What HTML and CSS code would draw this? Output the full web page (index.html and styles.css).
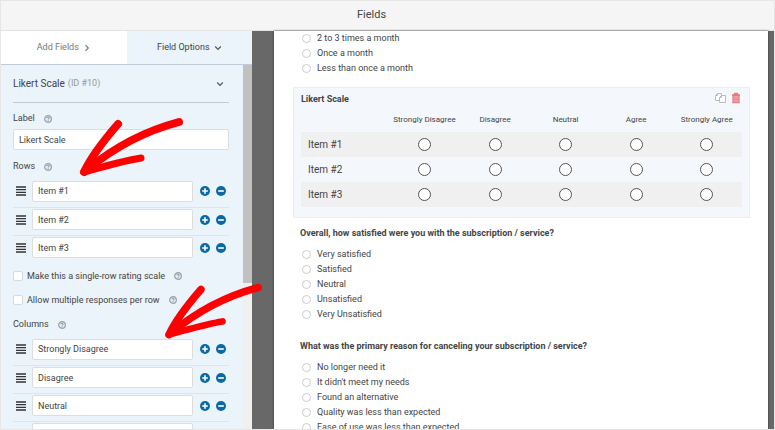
FILE: index.html
```html
<!DOCTYPE html>
<html lang="en">
<head>
<meta charset="UTF-8">
<meta name="viewport" content="width=device-width, initial-scale=1.0">
<title>Fields</title>
<link rel="stylesheet" href="styles.css">
</head>
<body>

<svg class="sprite" aria-hidden="true">
  <symbol id="help" viewBox="0 0 16 16">
    <circle cx="8" cy="8" r="6.6" fill="none" stroke="#9aa3ab" stroke-width="2.600"/>
    <path d="M5.600 6.400c0-1.400 1-2.100 2.400-2.100s2.400.7 2.400 2c0 1.400-2.200 1.500-2.200 3" fill="none" stroke="#9aa3ab" stroke-width="2.200"/>
    <circle cx="8.200" cy="11.500" r="1.300" fill="#9aa3ab"/>
  </symbol>
  <symbol id="bars" viewBox="0 0 10 10">
    <path d="M0 1h10M0 3.700h10M0 6.300h10M0 9h10" stroke="#333" stroke-width="1.300"/>
  </symbol>
  <symbol id="plus" viewBox="0 0 10 10">
    <circle cx="5" cy="5" r="5" fill="#0a6aa6"/>
    <path d="M5 2.200v5.600M2.200 5h5.600" stroke="#fff" stroke-width="1.600"/>
  </symbol>
  <symbol id="minus" viewBox="0 0 10 10">
    <circle cx="5" cy="5" r="5" fill="#0a6aa6"/>
    <path d="M2.200 5h5.600" stroke="#fff" stroke-width="1.600"/>
  </symbol>
  <symbol id="down" viewBox="0 0 8 8">
    <path d="M1.200 2.500l2.800 2.800 2.800-2.800" fill="none" stroke="#555" stroke-width="1.200"/>
  </symbol>
  <symbol id="right" viewBox="0 0 8 8">
    <path d="M2.500 1.200l2.800 2.800-2.800 2.800" fill="none" stroke="#777" stroke-width="1.200"/>
  </symbol>
</svg>

<div class="app">
  <header class="header"><h1>Fields</h1></header>

  <div class="main">
    <aside class="sidebar">
      <nav class="tabs">
        <a href="#add">Add Fields <svg><use href="#right"/></svg></a>
        <a href="#options" class="active">Field Options <svg><use href="#down"/></svg></a>
      </nav>

      <div class="panel">
        <div class="options">
          <h2>Likert Scale <span>(ID #10)</span> <svg><use href="#down"/></svg></h2>

          <div class="title"><label for="label">Label</label> <svg><use href="#help"/></svg></div>
          <input type="text" id="label" class="text" value="Likert Scale">

          <div class="title">Rows <svg><use href="#help"/></svg></div>
          <ul class="choices" id="rows"></ul>

          <div class="toggle">
            <input type="checkbox" id="single"><label for="single">Make this a single-row rating scale</label>
            <svg><use href="#help"/></svg>
          </div>
          <div class="toggle">
            <input type="checkbox" id="multiple"><label for="multiple">Allow multiple responses per row</label>
            <svg><use href="#help"/></svg>
          </div>

          <div class="title">Columns <svg><use href="#help"/></svg></div>
          <ul class="choices" id="columns"></ul>
        </div>
        <div class="scrollbar"><div class="thumb"></div></div>
      </div>

      <svg class="arrow arrow-rows" viewBox="0 0 110 66">
        <path d="M101 7C67 16 38 31 10 54"/>
        <path d="M40 9C27 24 14 40 6 57"/>
        <path d="M63 43C44 46 25 52 6 57" stroke-width="7"/>
      </svg>
      <svg class="arrow arrow-columns" viewBox="0 0 110 66">
        <path d="M101 7C67 16 38 31 10 54"/>
        <path d="M40 9C27 24 14 40 6 57"/>
        <path d="M63 43C44 46 25 52 6 57" stroke-width="7"/>
      </svg>
    </aside>

    <main class="preview">
      <fieldset class="field first">
        <label><input type="radio" name="often"> 2 to 3 times a month</label>
        <label><input type="radio" name="often"> Once a month</label>
        <label><input type="radio" name="often"> Less than once a month</label>
      </fieldset>

      <section class="field likert">
        <div class="likert-head">
          <h3>Likert Scale</h3>
          <button type="button" aria-label="Duplicate">
            <svg viewBox="0 0 12 12" fill="#fff" stroke="#bbb"><path d="M3.500 1.500h4v7h-6v-5zM3.500 1.500v2h-2"/><path d="M7.500 3.500h4v7h-6v-5zM7.500 3.500v2h-2"/></svg>
          </button>
          <button type="button" aria-label="Delete">
            <svg viewBox="0 0 12 12" fill="none" stroke="#e8797d"><path d="M2 3h8M4.500 2.500v-1h3v1" stroke-width="1.300"/><path d="M3 3.500v7h6v-7z" fill="#f4b5b7" stroke-width="1.300"/><path d="M5 5v4M7 5v4"/></svg>
          </button>
        </div>
        <table>
          <thead>
            <tr><th></th><th>Strongly Disagree</th><th>Disagree</th><th>Neutral</th><th>Agree</th><th>Strongly Agree</th></tr>
          </thead>
          <tbody id="likert"></tbody>
        </table>
      </section>

      <fieldset class="field">
        <legend>Overall, how satisfied were you with the subscription / service?</legend>
        <label><input type="radio" name="satisfied"> Very satisfied</label>
        <label><input type="radio" name="satisfied"> Satisfied</label>
        <label><input type="radio" name="satisfied"> Neutral</label>
        <label><input type="radio" name="satisfied"> Unsatisfied</label>
        <label><input type="radio" name="satisfied"> Very Unsatisfied</label>
      </fieldset>

      <fieldset class="field">
        <legend>What was the primary reason for canceling your subscription / service?</legend>
        <label><input type="radio" name="reason"> No longer need it</label>
        <label><input type="radio" name="reason"> It didn't meet my needs</label>
        <label><input type="radio" name="reason"> Found an alternative</label>
        <label><input type="radio" name="reason"> Quality was less than expected</label>
        <label><input type="radio" name="reason"> Ease of use was less than expected</label>
      </fieldset>
    </main>
  </div>
</div>

<script src="script.js"></script>
</body>
</html>
```

FILE: styles.css
```css
* {
  box-sizing: border-box;
}
body {
  margin: 0;
  font-family: Roboto, "Open Sans", sans-serif;
  font-size: 9px;
  line-height: 15px;
  color: #444;
}
h1, h2, h3, ul, fieldset {
  margin: 0;
  padding: 0;
  border: 0;
}
svg {
  width: 8px;
  height: 8px;
  flex: none;
}
input, button {
  font: inherit;
  color: inherit;
  margin: 0;
}
.sprite {
  display: none;
}
.app {
  height: 100vh;
  display: flex;
  flex-direction: column;
  border: 1px solid #e6e6e6;
  overflow: hidden;
}
.header {
  flex: none;
  height: 30px;
  background-color: #f5f5f5;
  border-bottom: 1px solid #e2e2e2;
  text-align: center;
}
.header h1 {
  padding-right: 32px;
  font-size: 11px;
  font-weight: normal;
  line-height: 27px;
}
.main {
  flex: 1;
  min-height: 0;
  display: flex;
  background-color: #686868;
}

/* sidebar */
.sidebar {
  position: relative;
  flex: none;
  width: 251px;
  display: flex;
  flex-direction: column;
  background-color: #ebf3fb;
}
.tabs {
  flex: none;
  display: flex;
  height: 34px;
  background-color: #fff;
  border-bottom: 1px solid #bfcbd6;
}
.tabs a {
  flex: 1;
  display: flex;
  align-items: center;
  justify-content: center;
  gap: 4px;
  color: #777;
  text-decoration: none;
}
.tabs .active {
  background-color: #ebf3fb;
  color: #444;
}
.panel {
  flex: 1;
  min-height: 0;
  display: flex;
}
.options {
  flex: 1;
  padding: 0 14px 0 12px;
  overflow: hidden;
}
.scrollbar {
  width: 9px;
  background-color: #f0f0f0;
}
.thumb {
  height: 60%;
  background-color: #c1c1c1;
}
.options h2 {
  display: flex;
  align-items: center;
  gap: 3px;
  height: 38px;
  padding-right: 5px;
  border-bottom: 1px solid #bfcbd6;
  font-size: 10px;
  font-weight: normal;
}
.options h2 span {
  flex: 1;
  font-size: 9px;
  color: #999;
}
.title {
  display: flex;
  align-items: center;
  gap: 9px;
  height: 15px;
  margin: 9px 0 5px;
}
.options h2 + .title {
  margin: 8px 0 3px;
}
.toggle + .title {
  margin-top: 5px;
}
.text {
  display: block;
  width: 100%;
  height: 21px;
  padding: 0 5px;
  background-color: #fff;
  border: 1px solid #ddd;
  border-radius: 2px;
}
.choices {
  margin-bottom: 1px;
  list-style: none;
}
.choices li {
  display: flex;
  align-items: center;
  height: 28px;
  padding: 0 3px 4px;
}
.choices li + li {
  border-top: 1px solid #dfe4ea;
}
.choices svg {
  width: 10px;
  height: 10px;
}
.choices .text {
  flex: 1;
  margin: 0 7px 0 6px;
}
.choices button {
  display: flex;
  padding: 0;
  margin-right: 6px;
  border: 0;
  background: none;
}
.choices button:last-child {
  margin-right: 0;
}
.toggle {
  display: flex;
  align-items: center;
  height: 24px;
  gap: 9px;
}
.toggle input {
  appearance: none;
  width: 10px;
  height: 10px;
  margin-right: -5px;
  background-color: #fff;
  border: 1px solid #d5d9dd;
  border-radius: 2px;
}

/* hand drawn arrows */
.arrow {
  position: absolute;
  fill: none;
  stroke: #f00;
  stroke-width: 8;
  stroke-linecap: round;
}
.arrow-rows {
  left: 77px;
  top: 84px;
  width: 110px;
  height: 66px;
}
.arrow-columns {
  left: 162px;
  top: 250px;
  width: 104px;
  height: 62px;
}

/* form preview */
.preview {
  flex: 1;
  margin: 0 6px 0 22px;
  padding: 0 18px 0 19px;
  background-color: #fff;
  box-shadow: 0 0 2px #333;
  overflow: hidden;
}
.field {
  padding-left: 7px;
}
.field legend, .field h3 {
  padding: 0;
  font-size: 9px;
  font-weight: bold;
}
.field legend {
  margin-bottom: 6px;
}
.field label {
  display: flex;
  align-items: center;
  gap: 6px;
}
.field input {
  appearance: none;
  width: 9px;
  height: 9px;
  margin-left: 2px;
  background-color: #fff;
  border: 1px solid #ccc;
  border-radius: 50%;
}
.field + .field {
  margin-top: 17px;
}
.likert {
  padding: 4px 7px 10px;
  background-color: #f4f8fd;
  border: 1px solid #eee;
}
.field + .likert {
  margin-top: 11px;
}
.likert + .field {
  margin-top: 8px;
}
.likert-head {
  display: flex;
  align-items: flex-start;
}
.likert-head h3 {
  flex: 1;
}
.likert-head button {
  display: flex;
  padding: 0;
  margin-left: 4px;
  border: 0;
  border-radius: 50%;
  background-color: #fff;
}
.likert-head svg {
  width: 12px;
  height: 12px;
}
.likert table {
  width: 100%;
  table-layout: fixed;
  border-collapse: collapse;
  text-align: center;
}
.likert th {
  height: 25px;
  padding: 0;
  font-size: 8px;
  font-weight: normal;
}
.likert th:first-child {
  width: 20%;
}
.likert tbody th {
  padding-left: 7px;
  font-size: 10px;
  text-align: left;
}
.likert td {
  padding: 0;
}
.likert tbody tr:nth-child(odd) {
  background-color: #f0f0f0;
}
.likert input {
  display: block;
  width: 13px;
  height: 13px;
  margin: 0 auto;
  border-color: #555;
}
```

FILE: script.js
```js
const rows = ['Item #1', 'Item #2', 'Item #3'];
const columns = ['Strongly Disagree', 'Disagree', 'Neutral', 'Agree', 'Strongly Agree'];

function choice(name) {
  return `<li>
    <svg><use href="#bars"/></svg>
    <input type="text" class="text" value="${name}" aria-label="${name}">
    <button type="button" aria-label="Add"><svg><use href="#plus"/></svg></button>
    <button type="button" aria-label="Remove"><svg><use href="#minus"/></svg></button>
  </li>`;
}

function likertRow(row) {
  const cells = columns.map(col => `<td><input type="radio" name="${row}" aria-label="${row}: ${col}"></td>`);
  return `<tr><th>${row}</th>${cells.join('')}</tr>`;
}

document.getElementById('rows').innerHTML = rows.map(choice).join('');
document.getElementById('columns').innerHTML = columns.map(choice).join('');
document.getElementById('likert').innerHTML = rows.map(likertRow).join('');
```
